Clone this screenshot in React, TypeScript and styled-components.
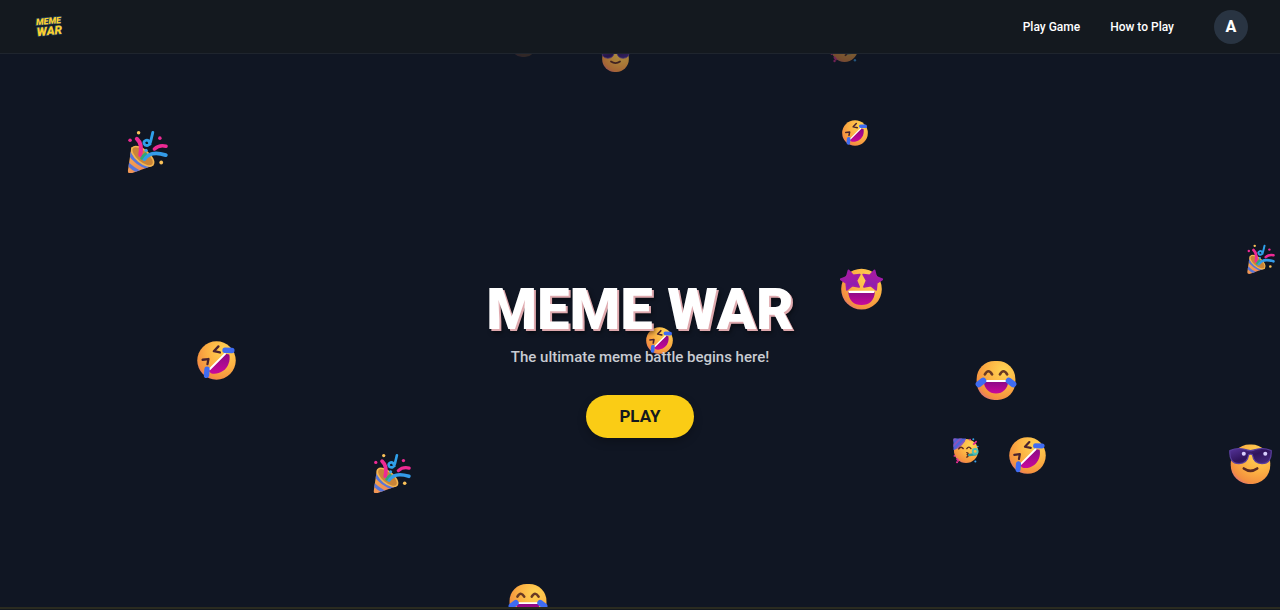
import React from "react";
import styled, { createGlobalStyle } from "styled-components";

const GlobalStyle = createGlobalStyle`
  *, *::before, *::after { box-sizing: border-box; }
  body {
    margin: 0;
    background: #101623;
    color: #ffffff;
    font-family: Roboto, "Liberation Sans", sans-serif;
    overflow-x: hidden;
  }
`;

const Header = styled.header`
  position: fixed;
  inset: 0 0 auto 0;
  z-index: 10;
  display: flex;
  align-items: center;
  justify-content: space-between;
  height: 54px;
  padding: 0 32px;
  background: #14191f;
  border-bottom: 1px solid #1f252e;
`;

const LogoLink = styled.a`
  display: flex;
`;

const Nav = styled.nav`
  display: flex;
  align-items: center;
  gap: 30px;
`;

const NavLink = styled.a`
  color: #ffffff;
  font-size: 12px;
  line-height: 20px;
  font-weight: 500;
  text-decoration: none;
`;

const Avatar = styled.button`
  width: 34px;
  height: 34px;
  margin-left: 10px;
  padding: 0;
  border: 0;
  border-radius: 50%;
  background: #293442;
  color: #ffffff;
  font: 800 16px/34px Roboto, "Liberation Sans", sans-serif;
  cursor: pointer;
`;

const Hero = styled.main`
  position: relative;
  display: flex;
  flex-direction: column;
  align-items: center;
  justify-content: center;
  min-height: calc(100vh - 3px);
  padding: 110px 16px 0;
  overflow: hidden;
  text-align: center;
`;

const Title = styled.h1`
  position: relative;
  margin: 0;
  font-size: 58px;
  line-height: 60px;
  font-weight: 900;
  text-shadow: 2px 2px 0 #dfa9ae, 3px 4px 4px rgba(0, 0, 0, 0.5);
`;

const Tagline = styled.p`
  position: relative;
  margin: 6px 0 26px;
  color: #c9ccd3;
  font-size: 15px;
  line-height: 24px;
  font-weight: 500;
`;

const PlayButton = styled.button`
  position: relative;
  padding: 10px 33px;
  border: 0;
  border-radius: 22px;
  background: #facc15;
  color: #14191f;
  font: 700 17px/23px Roboto, "Liberation Sans", sans-serif;
  box-shadow: 0 4px 8px rgba(0, 0, 0, 0.25);
  cursor: pointer;
`;

const NextSection = styled.section`
  min-height: 3px;
  background: #14191f;
  border-top: 2px solid #2a2b20;
`;

const Floating = styled.span<{ $x: number; $y: number; $size: number; $opacity: number }>`
  position: absolute;
  left: calc(50% + ${(p) => p.$x}px);
  top: ${(p) => p.$y}px;
  width: ${(p) => p.$size}px;
  opacity: ${(p) => p.$opacity};
  pointer-events: none;

  svg {
    display: block;
    width: 100%;
    height: auto;
  }
`;

const Definitions = styled.svg`
  position: absolute;
  width: 0;
  height: 0;
`;

const Gradients = () => (
  <Definitions aria-hidden="true">
    <defs>
      <radialGradient id="skin" cx="0.7" cy="0.25" r="0.9">
        <stop offset="0" stopColor="#ffd554" />
        <stop offset="0.5" stopColor="#fcb043" />
        <stop offset="0.82" stopColor="#f4903f" />
        <stop offset="1" stopColor="#d9688c" />
      </radialGradient>
      <linearGradient id="mouth" x1="0" y1="0" x2="0" y2="1">
        <stop offset="0" stopColor="#8b0a86" />
        <stop offset="1" stopColor="#c9089b" />
      </linearGradient>
      <linearGradient id="star" x1="0" y1="0" x2="0" y2="1">
        <stop offset="0" stopColor="#b4189c" />
        <stop offset="1" stopColor="#8420b4" />
      </linearGradient>
      <linearGradient id="lens" x1="0" y1="0" x2="1" y2="1">
        <stop offset="0" stopColor="#55349a" />
        <stop offset="0.5" stopColor="#30145c" />
        <stop offset="1" stopColor="#492c86" />
      </linearGradient>
      <linearGradient id="cone" x1="0" y1="0" x2="1" y2="1">
        <stop offset="0" stopColor="#fbb74a" />
        <stop offset="1" stopColor="#e9795d" />
      </linearGradient>
      <clipPath id="coneClip">
        <path d="M4 12.5 L20.5 26 L4 32 Q1.2 32.5 1.4 30Z" />
      </clipPath>
      <clipPath id="hatClip">
        <path d="M1 0.5 H16 Q13 10 0.5 15 V1Z" />
      </clipPath>
    </defs>
  </Definitions>
);

const Rofl = () => (
  <svg viewBox="0 0 32 32" fill="none" strokeLinecap="round" strokeLinejoin="round">
    <circle cx="16" cy="16" r="15.8" fill="url(#skin)" />
    <path d="M17.6 4.4 L13.8 8.4 L18.8 9.4" stroke="#4a2330" strokeWidth="1.9" />
    <path d="M4.6 15.4 L9.4 14.8 L8.6 19" stroke="#4a2330" strokeWidth="1.9" />
    <path d="M23.5 10.5 L26.5 11 C27.6 16.5 25.4 21.5 21.5 24.4 C18 26.9 14 27.4 11.4 26.4 L9.5 24.5Z" fill="url(#mouth)" />
    <path d="M23 10.6 L10.4 23.2" stroke="#ffffff" strokeWidth="1.6" />
    <path d="M23 7.6 L28.6 7.8" stroke="#3f6cf2" strokeWidth="4.4" />
    <path d="M8.2 23.2 L7.8 28.2" stroke="#3f6cf2" strokeWidth="4.4" />
  </svg>
);

const Joy = () => (
  <svg viewBox="0 0 34 32" fill="none" strokeLinecap="round" strokeLinejoin="round">
    <rect x="1.3" y="0" width="31.4" height="31.5" rx="14.5" fill="url(#skin)" />
    <path d="M8 10.8 Q10.8 5.8 13.8 10.8 M20.2 10.8 Q23 5.8 26 10.8" stroke="#6a3a24" strokeWidth="2.2" />
    <path d="M7.2 16.5 H26.8 C26.8 22 22.5 26.3 17 26.3 C11.5 26.3 7.2 22 7.2 16.5Z" fill="url(#mouth)" />
    <path d="M8 16.2 H26" stroke="#ffffff" strokeWidth="1.5" />
    <path d="M6.6 16 L3 18.8 M27.4 16 L31 18.8" stroke="#3f6cf2" strokeWidth="5" />
  </svg>
);

const STAR = "M0 -7.4 L2.5 -2.8 L7.6 -2.2 L4 1.6 L4.8 6.8 L0 4.6 L-4.8 6.8 L-4 1.6 L-7.6 -2.2 L-2.5 -2.8Z";

const Starstruck = () => (
  <svg viewBox="0 0 33 32" fill="none" strokeLinecap="round" strokeLinejoin="round">
    <circle cx="16.5" cy="16.2" r="15.6" fill="url(#skin)" />
    <g fill="url(#star)" stroke="#a01ca8" strokeWidth="1.4">
      <path d={STAR} transform="translate(8.3 9) rotate(-14)" />
      <path d={STAR} transform="translate(24.7 9) rotate(14)" />
    </g>
    <path d="M6.3 18 H26.8 C26.4 25 22.5 28.4 16.5 28.4 C10.5 28.4 6.7 25 6.3 18Z" fill="url(#mouth)" />
    <path d="M7.2 18.3 H25.8" stroke="#ffffff" strokeWidth="1.6" />
  </svg>
);

const Cool = () => (
  <svg viewBox="0 0 32 30" fill="none" strokeLinecap="round" strokeLinejoin="round">
    <rect x="1.3" y="0.4" width="29.4" height="29.4" rx="14" fill="url(#skin)" />
    <path
      d="M0.6 4.8 Q7.5 2 14 4.6 Q16 5.4 18 4.6 Q24.5 2 31.4 4.8 Q32 14.6 24.5 14.6 Q18.3 14.6 17.4 8 Q16 7 14.6 8 Q13.7 14.6 7.5 14.6 Q0 14.6 0.6 4.8Z"
      fill="url(#lens)"
      stroke="#5a3f9e"
      strokeWidth="0.9"
    />
    <circle cx="11" cy="7.3" r="1.5" fill="#d9d0ff" />
    <circle cx="27" cy="7.3" r="1.5" fill="#d9d0ff" />
    <path d="M11 18.2 Q16 21.8 21 18.2" stroke="#5a2a22" strokeWidth="1.9" />
  </svg>
);

const PartyFace = () => (
  <svg viewBox="0 0 32 32" fill="none" strokeLinecap="round" strokeLinejoin="round">
    <circle cx="16" cy="16" r="14.8" fill="url(#skin)" />
    <g clipPath="url(#hatClip)">
      <rect width="17" height="16" fill="#4f63d8" />
      <path d="M-2 5 L6 -3 M-2 12 L13 -3 M1 17 L18 0" stroke="#8a55bd" strokeWidth="2.6" />
    </g>
    <path d="M7 13.5 Q9.6 9.5 12.5 13 M17 13 Q19.6 9.5 22 13" stroke="#5a2a22" strokeWidth="1.8" />
    <path d="M17 18 Q20 18.5 17.5 20.5 Q20 22 17 23.5" stroke="#5a2a22" strokeWidth="1.8" />
    <path d="M20 21 L28 20" stroke="#2b9a9b" strokeWidth="3.2" />
    <circle cx="27.3" cy="16.5" r="3" stroke="#4fc0b8" strokeWidth="2.4" />
    <path d="M25.5 7.5 L28.5 4.5 M5 26 L6.5 28" stroke="#e62d92" strokeWidth="2.2" />
    <g fill="#e62d92">
      <circle cx="5" cy="29.8" r="1.3" />
      <circle cx="21" cy="2" r="1.2" />
      <circle cx="1.8" cy="22" r="1.1" />
    </g>
    <g fill="#3aa3ea">
      <circle cx="25" cy="1.6" r="1.2" />
      <circle cx="27.5" cy="29" r="1.3" />
      <circle cx="30.5" cy="10.5" r="1" />
    </g>
  </svg>
);

const Popper = () => (
  <svg viewBox="0 0 31 32" fill="none" strokeLinecap="round" strokeLinejoin="round">
    <g clipPath="url(#coneClip)">
      <rect y="10" width="22" height="22" fill="url(#cone)" />
      <path d="M2 16.5 Q7 25 18 28.5 M0 23.5 Q5 29 12 32" stroke="#5a76d8" strokeWidth="2.6" />
    </g>
    <ellipse cx="12.3" cy="19.4" rx="9.8" ry="4.6" transform="rotate(40 12.3 19.4)" fill="#c98438" stroke="#f3b54f" strokeWidth="1.2" />
    <path d="M10.5 18.5 Q12.4 10.5 8 6.5" stroke="#ee2a94" strokeWidth="3" />
    <path d="M13.5 21.5 Q18 15 29.3 18.5" stroke="#349be8" strokeWidth="2.9" />
    <path d="M11.5 21 Q13 18.5 14.5 17.5" stroke="#2fa67b" strokeWidth="2" />
    <path d="M19.8 1.8 L18.2 8.5 Q17 12.6 14 11 Q12 8.8 14.8 7.6 Q17 7 17.8 10.4" stroke="#2fa0ea" strokeWidth="2.1" />
    <path d="M21 14 Q24.5 10.8 29.5 12" stroke="#ee2a94" strokeWidth="2.6" />
    <g fill="#ee2a94">
      <circle cx="3" cy="7.5" r="1.3" />
      <circle cx="25" cy="6" r="1.3" />
    </g>
    <g fill="#fbc259">
      <circle cx="9.3" cy="2" r="1.3" />
      <circle cx="26" cy="24" r="1.4" />
    </g>
    <circle cx="14.8" cy="15" r="1.2" fill="#3aa3ea" />
  </svg>
);

const ART = {
  rofl: Rofl,
  joy: Joy,
  star: Starstruck,
  cool: Cool,
  party: PartyFace,
  popper: Popper,
};

type Item = { art: keyof typeof ART; x: number; y: number; size: number; opacity?: number };

const ITEMS: Item[] = [
  { art: "joy", x: -130, y: 32, size: 27, opacity: 0.14 },
  { art: "cool", x: -39, y: 45, size: 29, opacity: 0.65 },
  { art: "party", x: 190, y: 34, size: 29, opacity: 0.45 },
  { art: "rofl", x: 202, y: 120, size: 26 },
  { art: "popper", x: -514, y: 130, size: 42 },
  { art: "popper", x: 606, y: 244, size: 29 },
  { art: "star", x: 200, y: 268, size: 43 },
  { art: "rofl", x: 6, y: 327, size: 27 },
  { art: "rofl", x: -443, y: 341, size: 39 },
  { art: "joy", x: 335, y: 361, size: 42 },
  { art: "party", x: 313, y: 438, size: 26 },
  { art: "rofl", x: 369, y: 437, size: 37 },
  { art: "cool", x: 589, y: 444, size: 43 },
  { art: "popper", x: -268, y: 453, size: 39 },
  { art: "joy", x: -132, y: 584, size: 40 },
];

const Logo = () => (
  <svg width="36" height="30" viewBox="0 0 36 30" role="img" aria-label="Meme War">
    <g
      transform="rotate(-5 18 15)"
      fill="#fbd02f"
      stroke="#1c4260"
      strokeWidth="1.2"
      paintOrder="stroke"
      fontFamily="Roboto, sans-serif"
      fontWeight="900"
      fontStyle="italic"
      textAnchor="middle"
    >
      <text x="17" y="12" fontSize="9">MEME</text>
      <text x="17" y="23" fontSize="12">WAR</text>
    </g>
  </svg>
);

export default function App() {
  return (
    <>
      <GlobalStyle />
      <Gradients />
      <Header>
        <LogoLink href="#home">
          <Logo />
        </LogoLink>
        <Nav>
          <NavLink href="#play">Play Game</NavLink>
          <NavLink href="#how-to-play">How to Play</NavLink>
          <Avatar type="button">A</Avatar>
        </Nav>
      </Header>
      <Hero>
        {ITEMS.map(({ art, x, y, size, opacity = 1 }) => {
          const Art = ART[art];
          return (
            <Floating key={`${x}:${y}`} $x={x} $y={y} $size={size} $opacity={opacity} aria-hidden="true">
              <Art />
            </Floating>
          );
        })}
        <Title>MEME WAR</Title>
        <Tagline>The ultimate meme battle begins here!</Tagline>
        <PlayButton type="button">PLAY</PlayButton>
      </Hero>
      <NextSection />
    </>
  );
}
